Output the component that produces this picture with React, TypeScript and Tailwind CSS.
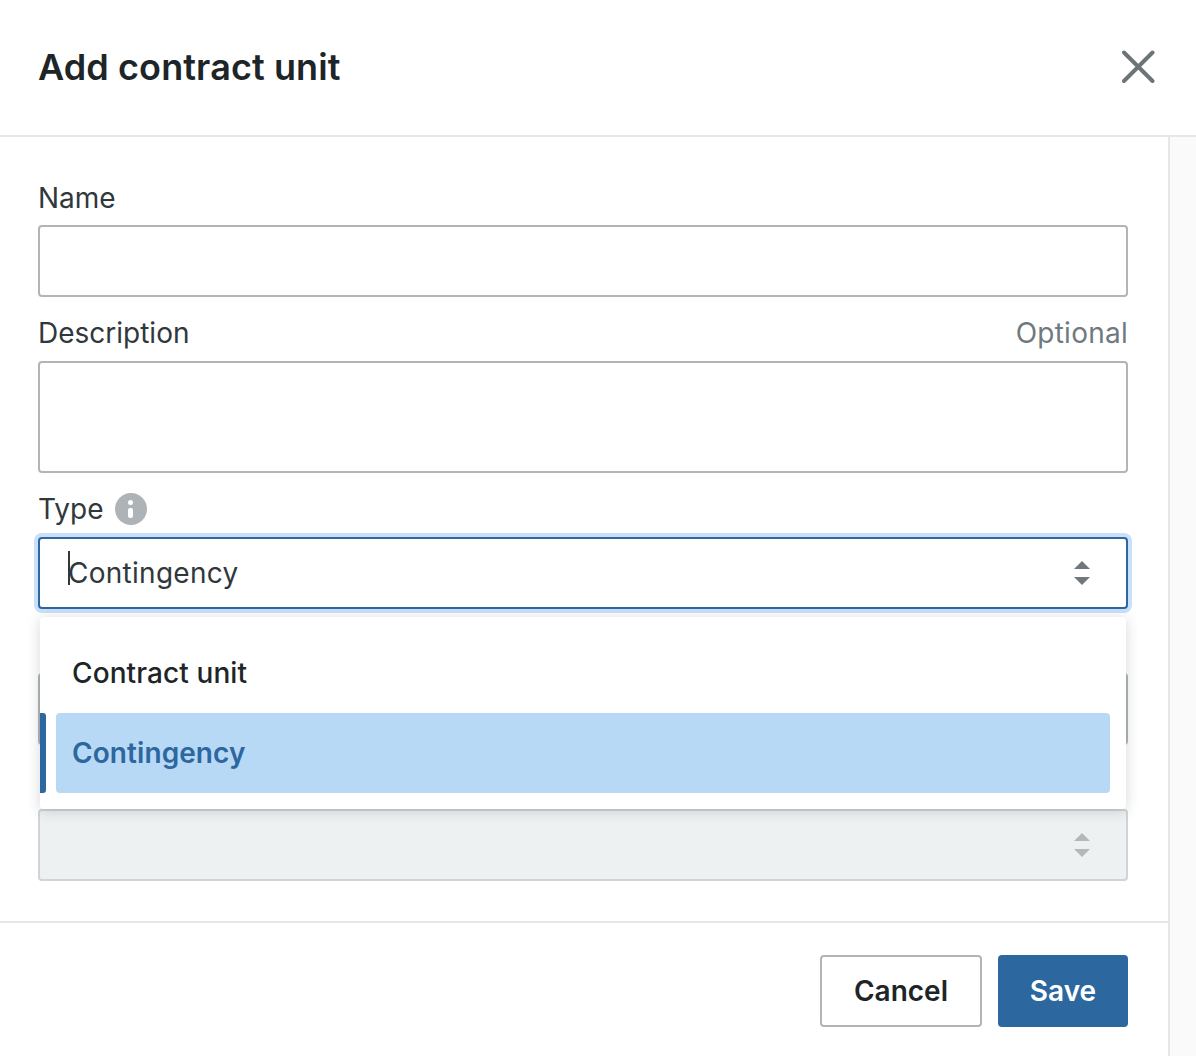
const Stepper = ({ color }: { color: string }) => (
  <svg width="16" height="24" viewBox="0 0 16 24" fill={color}>
    <path d="M8 0 L16 8 L0 8 Z" />
    <path d="M0 16 L16 16 L8 24 Z" />
  </svg>
);

export default function App() {
  return (
    <div className="w-[1196px] h-[1056px] overflow-hidden bg-white font-['Inter','Liberation_Sans',sans-serif] flex flex-col">
      <header className="h-[137px] shrink-0 border-b-2 border-[#e6e6ea] flex items-center justify-between pl-[38px] pr-[41px] pb-[2px]">
        <h1 className="text-[36px] font-semibold text-[#1e2528] tracking-[0.1px]">Add contract unit</h1>
        <svg width="33" height="33" viewBox="0 0 33 33" fill="none" stroke="#6b7578" strokeWidth="4" strokeLinecap="round">
          <path d="M2 2.5 L30.5 31 M30.5 2.5 L2 31" />
        </svg>
      </header>

      <div className="flex flex-1 min-h-0">
        <div className="w-[1170px] shrink-0 border-r-2 border-[#e6e6ea] flex flex-col">
          <div className="h-[784px] shrink-0 pl-[38px] pr-[40px] pt-[32px] relative">
            <div className="h-[56px] flex items-center pt-[1px] text-[28px] text-[#30383c]">Name</div>
            <div className="h-[72px] rounded border-2 border-[#b0b5b8] bg-white" />

            <div className="h-[64px] pt-[8px] flex items-center justify-between text-[28px]">
              <span className="text-[#30383c]">Description</span>
              <span className="text-[#6f7a7e] tracking-[0.25px]">Optional</span>
            </div>
            <div className="h-[112px] rounded border-2 border-[#b0b5b8] bg-white" />

            <div className="h-[64px] pt-[8px] flex items-center gap-[11px] text-[28px] text-[#30383c]">
              <span>Type</span>
              <span className="w-[32px] h-[32px] rounded-full bg-[#adb3b6] flex flex-col items-center justify-center gap-[3px]">
                <span className="w-[5px] h-[5px] rounded-full bg-white" />
                <span className="w-[5px] h-[10px] rounded-[2px] bg-white" />
              </span>
            </div>
            <div className="h-[72px] rounded border-2 border-[#2d679f] bg-white ring-4 ring-[#c9dffa] flex items-center justify-between pl-[28px] pr-[36px] text-[28px] text-[#30383c]">
              <span className="relative tracking-[0.27px]">
                <span className="absolute left-0 top-[-1px] w-[2px] h-[34px] bg-[#30383c]" />
                Contingency
              </span>
              <Stepper color="#6f787c" />
            </div>

            <div className="h-[64px]" />
            <div className="h-[72px] rounded border-2 border-[#b0b5b8] bg-white" />

            <div className="h-[64px]" />
            <div className="h-[72px] rounded border-2 border-[#cfd4d6] bg-[#eef1f2] flex items-center justify-end pr-[36px]">
              <Stepper color="#b3b8ba" />
            </div>

            <div className="absolute left-[40px] top-[480px] w-[1086px] h-[192px] bg-white rounded shadow-[0_2px_14px_rgba(30,40,50,0.18)] py-[16px] flex flex-col">
              <div className="h-[80px] flex items-center pl-[32px] text-[28px] font-medium text-[#1e2528] tracking-[0.1px]">Contract unit</div>
              <div className="h-[80px] flex gap-[10px]">
                <div className="w-[6px] bg-[#2d679f] rounded-r-[3px]" />
                <div className="w-[1054px] bg-[#b8d9f6] rounded flex items-center pl-[16px] text-[28px] font-semibold text-[#2d679f] tracking-[0.08px]">Contingency</div>
              </div>
            </div>
          </div>

          <footer className="flex-1 border-t-2 border-[#e6e6ea] flex justify-end gap-[16px] pt-[32px] pr-[40px]">
            <button className="w-[162px] h-[72px] rounded border-2 border-[#b0b5b8] bg-white text-[28px] font-semibold text-[#1e2528]">Cancel</button>
            <button className="w-[130px] h-[72px] rounded bg-[#2d679f] text-[28px] font-semibold text-white">Save</button>
          </footer>
        </div>
        <div className="flex-1 bg-[#fafafa]" />
      </div>
    </div>
  );
}
